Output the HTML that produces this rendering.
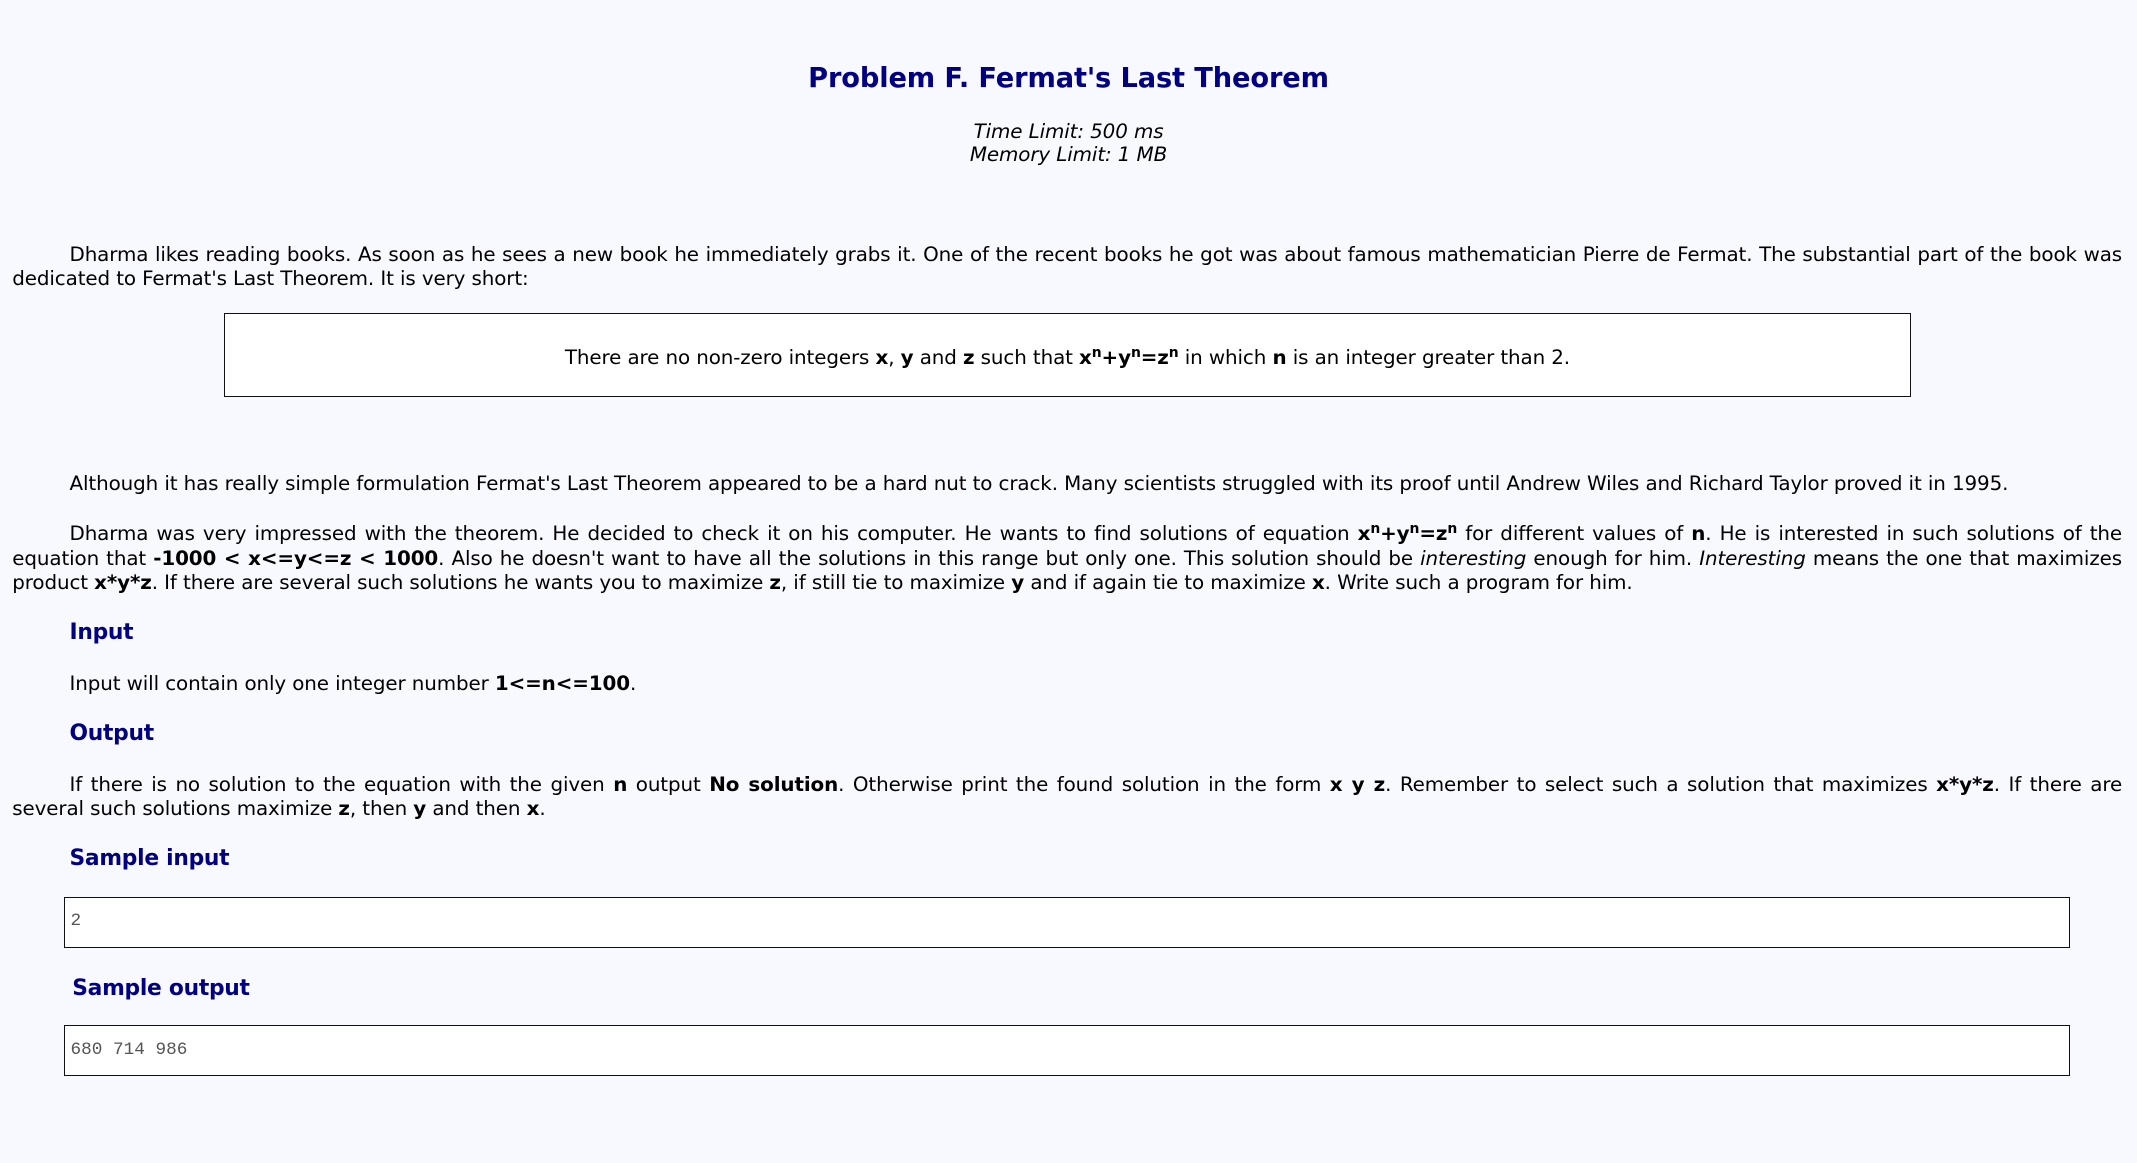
<!DOCTYPE html>
<html><head><meta charset="utf-8"><style>
html,body{margin:0;padding:0;background:#f8f9fe;}
body{width:2137px;height:1162px;overflow:hidden;}
#w{zoom:1.3629;position:relative;width:1568px;height:853px;font-family:"DejaVu Sans","Liberation Sans",sans-serif;font-size:14.6px;color:#000;letter-spacing:-0.08px}
.a{position:absolute;white-space:nowrap;line-height:18px}
h1,h2{margin:0;color:#000080;font-weight:bold;position:absolute;white-space:nowrap}
h1{font-size:20px;left:0;width:1568px;text-align:center;top:46px;letter-spacing:-0.1px}
h2{font-size:16px;left:51px;letter-spacing:-0.2px}
.c{left:0;width:1568px;text-align:center;font-style:italic}
p{position:absolute;left:9px;width:1548px;margin:0;text-align:justify;text-indent:42px;line-height:18px}
.box{position:absolute;background:#fff;border:1px solid #111}
.pre{font-family:"Liberation Mono",monospace;font-size:13px;color:#555;position:absolute;left:4px;top:10px;letter-spacing:0}
sup{font-size:70%;vertical-align:5px;line-height:0}
</style></head><body><div id="w">
<h1>Problem F. Fermat's Last Theorem</h1>
<div class="a c" style="top:88px">Time Limit: 500 ms</div>
<div class="a c" style="top:105px">Memory Limit: 1 MB</div>
<p style="top:178px">Dharma likes reading books. As soon as he sees a new book he immediately grabs it. One of the recent books he got was about famous mathematician Pierre de Fermat. The substantial part of the book was dedicated to Fermat's Last Theorem. It is very short:</p>
<div class="box" style="left:164px;top:230px;width:1237px;height:60px"><div class="a" style="left:0;width:1237px;text-align:center;top:23px">There are no non-zero integers <b>x</b>, <b>y</b> and <b>z</b> such that <b>x<sup>n</sup>+y<sup>n</sup>=z<sup>n</sup></b> in which <b>n</b> is an integer greater than 2.</div></div>
<p style="top:346px">Although it has really simple formulation Fermat's Last Theorem appeared to be a hard nut to crack. Many scientists struggled with its proof until Andrew Wiles and Richard Taylor proved it in 1995.</p>
<p style="top:383px">Dharma was very impressed with the theorem. He decided to check it on his computer. He wants to find solutions of equation <b>x<sup>n</sup>+y<sup>n</sup>=z<sup>n</sup></b> for different values of <b>n</b>. He is interested in such solutions of the equation that <b>-1000 &lt; x&lt;=y&lt;=z &lt; 1000</b>. Also he doesn't want to have all the solutions in this range but only one. This solution should be <i>interesting</i> enough for him. <i>Interesting</i> means the one that maximizes product <b>x*y*z</b>. If there are several such solutions he wants you to maximize <b>z</b>, if still tie to maximize <b>y</b> and if again tie to maximize <b>x</b>. Write such a program for him.</p>
<h2 style="top:455px">Input</h2>
<div class="a" style="left:51px;top:493px">Input will contain only one integer number <b>1&lt;=n&lt;=100</b>.</div>
<h2 style="top:529px">Output</h2>
<p style="top:567px;text-align-last:justify;white-space:nowrap">If there is no solution to the equation with the given <b>n</b> output <b>No solution</b>. Otherwise print the found solution in the form <b>x y z</b>. Remember to select such a solution that maximizes <b>x*y*z</b>. If there are</p>
<div class="a" style="left:9px;top:585px">several such solutions maximize <b>z</b>, then <b>y</b> and then <b>x</b>.</div>
<h2 style="top:621px">Sample input</h2>
<div class="box" style="left:47px;top:658px;width:1470px;height:36px"><div class="pre">2</div></div>
<h2 style="top:716px;left:53px">Sample output</h2>
<div class="box" style="left:47px;top:752px;width:1470px;height:36px"><div class="pre">680 714 986</div></div>
</div></body></html>
